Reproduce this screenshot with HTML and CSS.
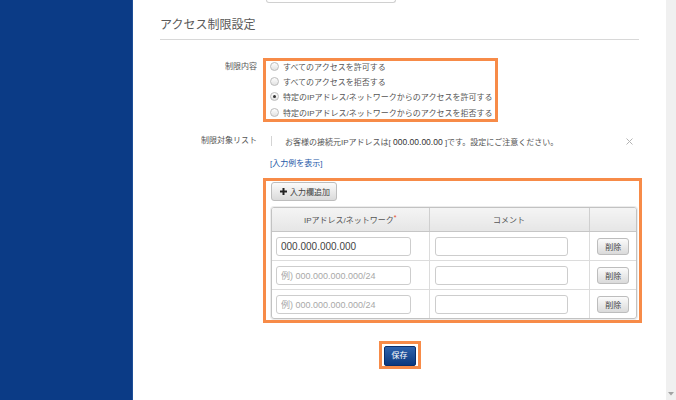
FILE: index.html
```html
<!DOCTYPE html>
<html>
<head>
    <meta charset="utf-8">
    <title>アクセス制限設定</title>
    <link rel="stylesheet" href="styles.css">
</head>
<body>
    <div class="page">
        <div class="sidebar"></div>

        <div class="main">
            <div class="prev-input"></div>
            <h2 class="section-title">アクセス制限設定</h2>

            <!-- 制限内容 -->
            <div class="form-row row-mode">
                <div class="form-label">制限内容</div>
                <div class="radio-group mark">
                    <div class="radio-list">
                        <label class="radio"><span class="radio-dot"></span>すべてのアクセスを許可する</label>
                        <label class="radio"><span class="radio-dot"></span>すべてのアクセスを拒否する</label>
                        <label class="radio"><span class="radio-dot checked"></span>特定のIPアドレス/ネットワークからのアクセスを許可する</label>
                        <label class="radio"><span class="radio-dot"></span>特定のIPアドレス/ネットワークからのアクセスを拒否する</label>
                    </div>
                </div>
            </div>

            <!-- 制限対象リスト -->
            <div class="form-row row-list">
                <div class="form-label">制限対象リスト</div>
                <div class="form-value">
                    <div class="notice">
                        <span class="notice-bar"></span>
                        <span class="notice-text">お客様の接続元IPアドレスは[ <span class="ip">000.00.00.00</span> ]です。設定にご注意ください。</span>
                        <svg class="notice-close" width="7" height="7" viewBox="0 0 7 7"><path d="M0.5 0.5L6.5 6.5M6.5 0.5L0.5 6.5" stroke="#b4b4b4" stroke-width="1"/></svg>
                    </div>
                    <a class="example-link" href="#">[入力例を表示]</a>

                    <div class="list-box mark">
                        <button class="btn btn-gray btn-add">
                            <svg width="7" height="7" viewBox="0 0 7 7"><path d="M2.5 0h2v2.5h2.5v2h-2.5v2.5h-2v-2.5h-2.5v-2h2.5z" fill="#222"/></svg>
                            入力欄追加
                        </button>
                        <div class="grid">
                            <table>
                                <colgroup>
                                    <col class="col-ip">
                                    <col class="col-comment">
                                    <col>
                                </colgroup>
                                <thead>
                                    <tr>
                                        <th>IPアドレス/ネットワーク<span class="req">*</span></th>
                                        <th>コメント</th>
                                        <th></th>
                                    </tr>
                                </thead>
                                <tbody>
                                    <tr>
                                        <td><input class="field field-ip" type="text" value="000.000.000.000"></td>
                                        <td><input class="field" type="text"></td>
                                        <td><button class="btn btn-gray btn-del">削除</button></td>
                                    </tr>
                                    <tr>
                                        <td><input class="field field-ip" type="text" placeholder="例) 000.000.000.000/24"></td>
                                        <td><input class="field" type="text"></td>
                                        <td><button class="btn btn-gray btn-del">削除</button></td>
                                    </tr>
                                    <tr>
                                        <td><input class="field field-ip" type="text" placeholder="例) 000.000.000.000/24"></td>
                                        <td><input class="field" type="text"></td>
                                        <td><button class="btn btn-gray btn-del">削除</button></td>
                                    </tr>
                                </tbody>
                            </table>
                        </div>
                    </div>
                </div>
            </div>

            <div class="save-row">
                <span class="save-mark"><button class="btn btn-save">保存</button></span>
            </div>
        </div>

        <div class="scrollbar">
            <svg class="scroll-arrow" width="6" height="4" viewBox="0 0 6 4"><path d="M0 0h6l-3 3.5z" fill="#a3a3a3"/></svg>
        </div>
    </div>
</body>
</html>
```

FILE: styles.css
```css
html, body { margin: 0; height: 100%; }
body {
    font-family: "Liberation Sans", "Noto Sans CJK JP", sans-serif;
    font-size: 8px;
    color: #555;
    background: #fff;
    overflow: hidden;
}
.page { display: flex; height: 400px; }
.sidebar {
    width: 132px;
    flex: none;
    background: #0b3b86;
    border-right: 1px solid #1d4f98;
}
.main {
    flex: 1;
    padding: 0 27px;
    min-width: 0;
}
.scrollbar {
    width: 10px;
    flex: none;
    background: #f0f0f0;
    display: flex;
    flex-direction: column;
    justify-content: flex-end;
    align-items: center;
    padding-bottom: 4px;
    box-sizing: border-box;
}

.prev-input {
    margin-left: 106px;
    width: 130px;
    height: 3px;
    border: 1px solid #d0d0d0;
    border-top: none;
    border-radius: 0 0 4px 4px;
    box-sizing: border-box;
}
.section-title {
    margin: 0;
    padding: 14px 0 6px;
    font-size: 12px;
    line-height: 16px;
    font-weight: normal;
    color: #5a5a5a;
    border-bottom: 1px solid #d8d8d8;
}

.mark { outline: 3px solid #f78b48; }

.form-row { display: flex; }
.form-label {
    width: 97px;
    margin-right: 9px;
    flex: none;
    text-align: right;
    color: #555;
}
.form-value { flex: 1; min-width: 0; }

.row-mode { margin-top: 21px; }
.row-mode .form-label { line-height: 15.4px; margin-top: -2.5px; }
.radio-group { width: 229px; height: 58px; }
.radio-list { margin-top: -2.5px; }
.radio {
    display: flex;
    align-items: center;
    height: 15.4px;
    color: #555;
}
.radio-dot {
    width: 9px;
    height: 9px;
    margin: 0 4px 0 4px;
    box-sizing: border-box;
    border: 1px solid #bcbcbc;
    border-radius: 50%;
    background: linear-gradient(#fdfdfd, #e2e2e2);
    display: flex;
    align-items: center;
    justify-content: center;
}
.radio-dot.checked::after {
    content: "";
    width: 3px;
    height: 3px;
    border-radius: 50%;
    background: #333;
}

.row-list { margin-top: 15px; }
.row-list .form-label { line-height: 14px; }
.notice {
    display: flex;
    align-items: center;
    height: 14px;
}
.notice-bar {
    width: 1px;
    height: 10px;
    margin-left: 5px;
    background: #d4d4d4;
}
.notice-text { margin-left: 13px; flex: 1; color: #555; }
.notice-text .ip { font-size: 8.5px; color: #333; }
.notice-close { margin-right: 6px; }

.example-link {
    display: block;
    margin: 10px 0 0 4px;
    line-height: 12px;
    color: #2559a8;
    text-decoration: none;
}

.list-box {
    margin-top: 11px;
    width: 373px;
    padding: 1px 2px 1px 5px;
    box-sizing: border-box;
}
.btn {
    font-family: inherit;
    font-size: 8px;
    padding: 0;
    cursor: pointer;
}
.btn-gray {
    background: linear-gradient(#fbfbfb, #dadada);
    border: 1px solid #bdbdbd;
    border-radius: 3px;
    color: #444;
}
.btn-add {
    display: flex;
    align-items: center;
    gap: 3px;
    width: 66px;
    height: 19px;
    padding-left: 8px;
}
.grid {
    margin-top: 6px;
    width: 366px;
    border: 1px solid #c2c2c2;
    border-radius: 3px;
    box-shadow: 0 0 0 1px #ececec;
    box-sizing: border-box;
    overflow: hidden;
}
table {
    width: 100%;
    border-collapse: collapse;
    table-layout: fixed;
}
.col-ip { width: 157px; }
.col-comment { width: 160px; }
th {
    height: 23px;
    padding: 0;
    font-weight: normal;
    color: #555;
    background: linear-gradient(#f4f4f4, #e6e6e6);
    border-bottom: 1px solid #c6c6c6;
}
th + th { border-left: 1px solid #cfcfcf; }
.req { color: #e4462a; font-size: 7px; vertical-align: top; }
td {
    height: 28px;
    padding: 0 0 0 4px;
    border-top: 1px solid #dcdcdc;
}
tbody tr:first-child td { border-top: none; }
td + td { border-left: 1px solid #dcdcdc; padding-left: 5px; }
td:last-child { text-align: center; padding: 0; }
.field {
    display: block;
    width: 133px;
    height: 19px;
    box-sizing: border-box;
    border: 1px solid #cdcdcd;
    border-radius: 3px;
    padding: 0 4px;
    font-family: "Liberation Sans", "Noto Sans CJK JP", sans-serif;
    font-size: 10px;
    color: #444;
    background: #fff;
}
.field-ip { width: 135px; }
.field::placeholder { color: #a8a8a8; font-size: 9px; }
.btn-del { width: 32px; height: 17px; margin-left: 1px; }

.save-row { text-align: center; margin-top: 21px; }
.save-mark {
    display: inline-block;
    border: 3px solid #f78b48;
    padding: 2px 2px 0;
    line-height: 0;
}
.btn-save {
    width: 32px;
    height: 20px;
    border: 1px solid #0a2f6c;
    border-radius: 2px;
    background: linear-gradient(#2d62ad, #0c397e);
    color: #fff;
    line-height: 18px;
}
```
